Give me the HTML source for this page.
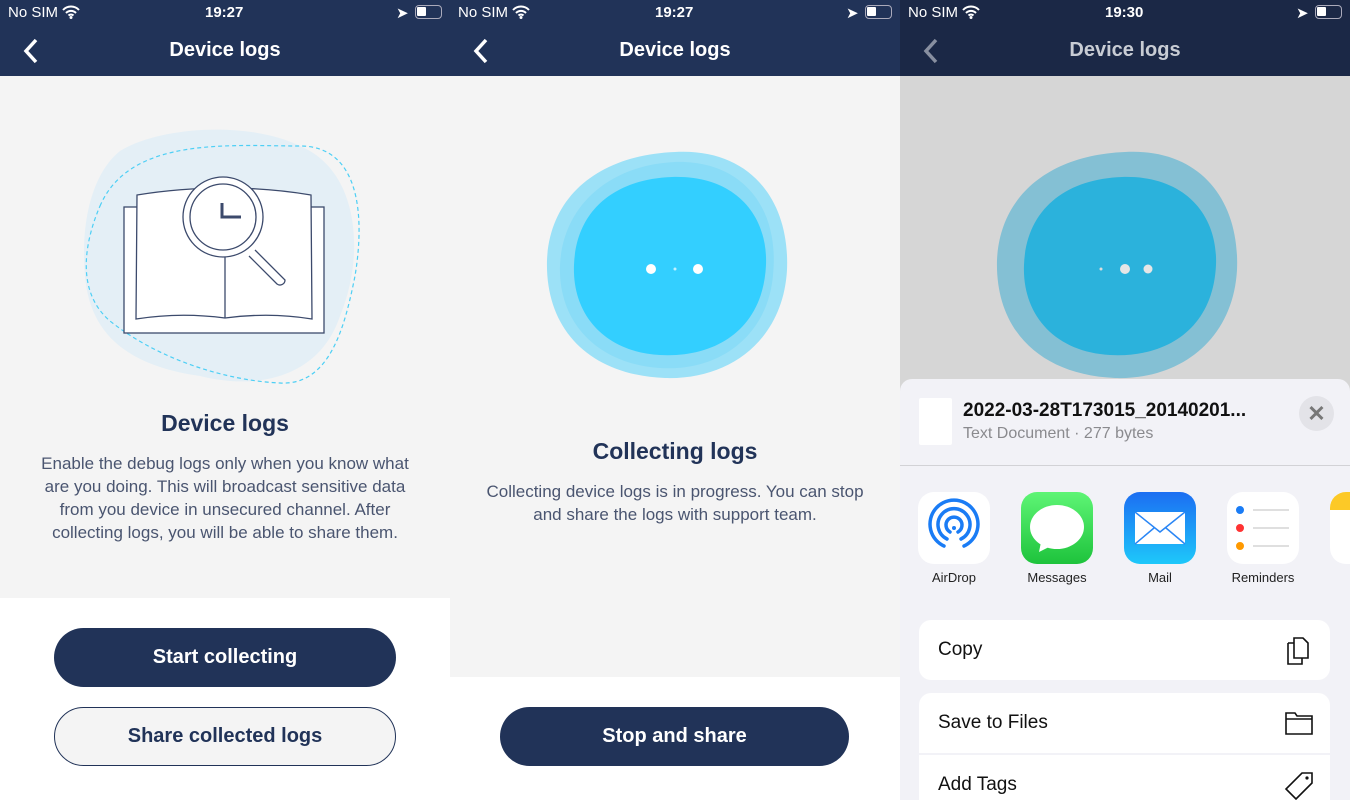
<!DOCTYPE html><html style="overflow:hidden;height:800px"><head><meta charset="utf-8"><style>
*{margin:0;padding:0;box-sizing:border-box}
body{width:1350px;height:800px;overflow:hidden;font-family:"Liberation Sans",sans-serif;position:relative;background:#f4f4f4}
.p{position:absolute;top:0;width:450px;height:800px;overflow:hidden}
.nav{position:absolute;left:0;top:0;width:450px;height:76px;background:#213358;color:#fff}
.sb{position:absolute;top:4px;font-size:15px}
.title{position:absolute;top:39px;width:450px;text-align:center;font-size:20px;font-weight:bold}
.back{position:absolute;left:22px;top:38px}
.wifi{position:absolute;left:62px;top:5px}
.btn{position:absolute;border-radius:30px;text-align:center;font-size:20px;font-weight:bold;line-height:58px;height:59px}
.h{position:absolute;width:450px;text-align:center;font-size:23px;font-weight:bold;color:#213358}
.t{position:absolute;width:450px;text-align:center;font-size:17px;color:#4a5570;line-height:23px}
.ic{position:absolute;top:492px;width:72px;height:72px;border-radius:16px;overflow:hidden}
.lb{position:absolute;top:570px;width:100px;text-align:center;font-size:13px;color:#222}
.row{position:absolute;left:919px;width:411px;background:#fff;font-size:19px;color:#111;padding-left:19px}
</style></head><body>
<!-- panel 1 -->
<div class="p" style="left:0">
<div class="nav"><span class="sb" style="left:8px">No SIM</span><svg class="wifi" width="18" height="14"><path d="M1 5 A11 11 0 0 1 17 5 M4 8 A7 7 0 0 1 14 8 M6.5 10.5 A3.5 3.5 0 0 1 11.5 10.5" stroke="#fff" stroke-width="2" fill="none"/><circle cx="9" cy="12.5" r="1.5" fill="#fff"/></svg><span class="sb" style="left:205px;font-weight:bold">19:27</span><span class="sb" style="left:396px">➤</span><div style="position:absolute;left:415px;top:5px;width:27px;height:14px;border:1.5px solid #aab;border-radius:4px"><div style="width:9px;height:9px;background:#fff;margin:1px;border-radius:1px"></div></div>
<svg class="back" width="18" height="26"><path d="M14 2 L4 13 L14 24" stroke="#fff" stroke-width="3.5" fill="none"/></svg><div class="title">Device logs</div></div>
<svg style="position:absolute;left:0;top:76px" width="450" height="320">
<path d="M120 75 C160 50 250 45 300 70 C360 95 365 180 340 240 C320 300 260 315 200 300 C130 290 90 260 85 200 C80 140 95 95 120 75Z" fill="#e4eff6"/>
<path d="M100 130 C130 60 230 70 300 70 C360 70 365 140 355 200 C345 250 330 310 280 307 C230 305 160 285 110 245 C75 215 85 165 100 130Z" fill="none" stroke="#4dcff5" stroke-width="1.2" stroke-dasharray="4 3"/>
<rect x="124" y="131" width="200" height="126" fill="#fff" stroke="#3c4a6c" stroke-width="1.3"/>
<path d="M137 119 Q180 112 225 112 Q270 112 311 119 L312 243 Q270 236 225 242 Q180 236 136 243Z" fill="#fff" stroke="#3c4a6c" stroke-width="1.3"/>
<line x1="225" y1="112" x2="225" y2="242" stroke="#3c4a6c" stroke-width="1.3"/>
<path d="M255 174 L285 204 A5 5 0 0 1 277 208 L249 180" fill="#fff" stroke="#3c4a6c" stroke-width="1.3"/>
<circle cx="223" cy="141" r="40" fill="#fff" stroke="#3c4a6c" stroke-width="1.3"/>
<circle cx="223" cy="141" r="33" fill="#fff" stroke="#3c4a6c" stroke-width="1.3"/>
<path d="M222 127 L222 141 L241 141" fill="none" stroke="#3c4a6c" stroke-width="3"/>
</svg>
<div class="h" style="top:410px">Device logs</div>
<div class="t" style="top:452px">Enable the debug logs only when you know what<br>are you doing. This will broadcast sensitive data<br>from you device in unsecured channel. After<br>collecting logs, you will be able to share them.</div>
<div style="position:absolute;top:598px;left:0;width:450px;height:202px;background:#fff"></div>
<div class="btn" style="left:54px;top:628px;width:342px;background:#213358;color:#fff">Start collecting</div>
<div class="btn" style="left:54px;top:707px;width:342px;background:#f4f4f4;border:1.3px solid #213358;color:#213358;line-height:56px">Share collected logs</div>
</div>
<!-- panel 2 -->
<div class="p" style="left:450px">
<div class="nav"><span class="sb" style="left:8px">No SIM</span><svg class="wifi" width="18" height="14"><path d="M1 5 A11 11 0 0 1 17 5 M4 8 A7 7 0 0 1 14 8 M6.5 10.5 A3.5 3.5 0 0 1 11.5 10.5" stroke="#fff" stroke-width="2" fill="none"/><circle cx="9" cy="12.5" r="1.5" fill="#fff"/></svg><span class="sb" style="left:205px;font-weight:bold">19:27</span><span class="sb" style="left:396px">➤</span><div style="position:absolute;left:415px;top:5px;width:27px;height:14px;border:1.5px solid #aab;border-radius:4px"><div style="width:9px;height:9px;background:#fff;margin:1px;border-radius:1px"></div></div>
<svg class="back" width="18" height="26"><path d="M14 2 L4 13 L14 24" stroke="#fff" stroke-width="3.5" fill="none"/></svg><div class="title">Device logs</div></div>
<svg style="position:absolute;left:0;top:140px" width="450" height="250">
<path d="M225 12 C300 8 340 60 337 130 C333 200 280 240 215 238 C140 235 95 190 97 120 C100 55 150 15 225 12Z" fill="#9ce1f7"/>
<path d="M225 22 C290 20 330 65 323 135 C318 195 270 232 210 228 C150 224 108 185 110 125 C113 65 160 25 225 22Z" fill="#7fd8f6" opacity=".6"/>
<path d="M222 37 C285 35 318 75 316 125 C313 190 265 218 210 215 C155 212 122 175 124 125 C126 70 165 39 222 37Z" fill="#33cfff"/>
<circle cx="201" cy="129" r="5" fill="#fff"/><circle cx="225" cy="129" r="1.5" fill="#fff" opacity=".7"/><circle cx="248" cy="129" r="5" fill="#fff"/>
</svg>
<div class="h" style="top:438px">Collecting logs</div>
<div class="t" style="top:480px">Collecting device logs is in progress. You can stop<br>and share the logs with support team.</div>
<div style="position:absolute;top:677px;left:0;width:450px;height:123px;background:#fff"></div>
<div class="btn" style="left:50px;top:707px;width:349px;background:#213358;color:#fff">Stop and share</div>
</div>
<!-- panel 3 -->
<div class="p" style="left:900px;background:#d6d6d6">
<div class="nav" style="background:#1b2846;color:#fff"><span class="sb" style="left:8px">No SIM</span><svg class="wifi" width="18" height="14"><path d="M1 5 A11 11 0 0 1 17 5 M4 8 A7 7 0 0 1 14 8 M6.5 10.5 A3.5 3.5 0 0 1 11.5 10.5" stroke="#fff" stroke-width="2" fill="none"/><circle cx="9" cy="12.5" r="1.5" fill="#fff"/></svg><span class="sb" style="left:205px;font-weight:bold">19:30</span><span class="sb" style="left:396px">➤</span><div style="position:absolute;left:415px;top:5px;width:27px;height:14px;border:1.5px solid #aab;border-radius:4px"><div style="width:9px;height:9px;background:#fff;margin:1px;border-radius:1px"></div></div>
<svg class="back" width="18" height="26"><path d="M14 2 L4 13 L14 24" stroke="#888fa0" stroke-width="3.5" fill="none"/></svg><div class="title" style="color:#c8ccd4">Device logs</div></div>
<svg style="position:absolute;left:0;top:140px" width="450" height="250">
<path d="M225 12 C300 8 340 60 337 130 C333 200 280 240 215 238 C140 235 95 190 97 120 C100 55 150 15 225 12Z" fill="#84c0d4"/>
<path d="M222 37 C285 35 318 75 316 125 C313 190 265 218 210 215 C155 212 122 175 124 125 C126 70 165 39 222 37Z" fill="#2bb2dc"/>
<circle cx="225" cy="129" r="5" fill="#e6e6e6"/><circle cx="201" cy="129" r="1.5" fill="#ddd"/><circle cx="248" cy="129" r="4.5" fill="#e6e6e6"/>
</svg>
<div style="position:absolute;left:0;top:379px;width:450px;height:421px;background:#f2f2f7;border-radius:12px 12px 0 0"></div>
<div style="position:absolute;left:19px;top:398px;width:33px;height:47px;background:#fff;border-radius:2px"></div>
<div style="position:absolute;left:63px;top:400px;font-size:19px;font-weight:bold;color:#111">2022-03-28T173015_20140201...</div>
<div style="position:absolute;left:63px;top:425px;font-size:16px;color:#8a8a8e">Text Document · 277 bytes</div>
<div style="position:absolute;left:399px;top:396px;width:35px;height:35px;border-radius:50%;background:#e3e3e8;color:#777;font-size:22px;text-align:center;line-height:35px;font-weight:bold">✕</div>
<div style="position:absolute;left:0;top:465px;width:450px;height:1px;background:#d2d2d6"></div>
</div>
<div class="ic" style="left:918px;background:#fff"><svg width="72" height="72"><g fill="none" stroke="#1a7cf5" stroke-width="3.5" stroke-linecap="round"><path d="M26 54 A24 24 0 1 1 46 54"/><path d="M29 47 A16 16 0 1 1 43 47"/><path d="M32 40 A8 8 0 1 1 40 40"/></g><circle cx="36" cy="36" r="2" fill="#1a7cf5"/></svg></div>
<div class="ic" style="left:1021px;background:linear-gradient(#5ef575,#1ec33c)"><svg width="72" height="72"><ellipse cx="36" cy="35" rx="27" ry="22" fill="#fff"/><path d="M20 50 L18 60 L30 54Z" fill="#fff"/></svg></div>
<div class="ic" style="left:1124px;background:linear-gradient(#1c6ef2,#1ec8fa)"><svg width="72" height="72"><rect x="11" y="20" width="50" height="32" fill="#fff"/><path d="M11 20 L36 40 L61 20 M11 52 L30 36 M61 52 L42 36" stroke="#2a86f5" stroke-width="1.5" fill="none"/></svg></div>
<div class="ic" style="left:1227px;background:#fff"><svg width="72" height="72"><g stroke-width="2"><circle cx="13" cy="18" r="5" fill="#1a7cf5" stroke="#fff"/><circle cx="13" cy="36" r="5" fill="#f33" stroke="#fff"/><circle cx="13" cy="54" r="5" fill="#f90" stroke="#fff"/></g><g stroke="#ccc" stroke-width="1.2"><line x1="26" y1="18" x2="62" y2="18"/><line x1="26" y1="36" x2="62" y2="36"/><line x1="26" y1="54" x2="62" y2="54"/></g></svg></div>
<div class="ic" style="left:1330px;background:#fff"><div style="height:18px;background:#fcc927"></div></div>
<div class="lb" style="left:904px">AirDrop</div><div class="lb" style="left:1007px">Messages</div><div class="lb" style="left:1110px">Mail</div><div class="lb" style="left:1213px">Reminders</div>
<div class="row" style="top:620px;height:60px;line-height:60px;border-radius:12px">Copy<svg style="position:absolute;right:16px;top:14px" width="30" height="32"><path d="M10 4 H19 L24 9 V24 H10Z M4 9 H10 M4 9 V30 H18 V24" fill="none" stroke="#111" stroke-width="1.6"/></svg></div>
<div class="row" style="top:693px;height:60px;line-height:60px;border-radius:12px 12px 0 0">Save to Files<svg style="position:absolute;right:16px;top:16px" width="30" height="28"><path d="M2 4 H11 L13 7 H28 V25 H2Z M2 10 H28" fill="none" stroke="#111" stroke-width="1.6"/></svg></div>
<div class="row" style="top:755px;height:45px;line-height:60px;overflow:hidden">Add Tags<svg style="position:absolute;right:16px;top:16px" width="30" height="30"><path d="M18 2 H28 V12 L12 28 L2 18Z" fill="none" stroke="#111" stroke-width="1.6"/><circle cx="23" cy="7" r="1.6" fill="#111"/></svg></div>
</body></html>
